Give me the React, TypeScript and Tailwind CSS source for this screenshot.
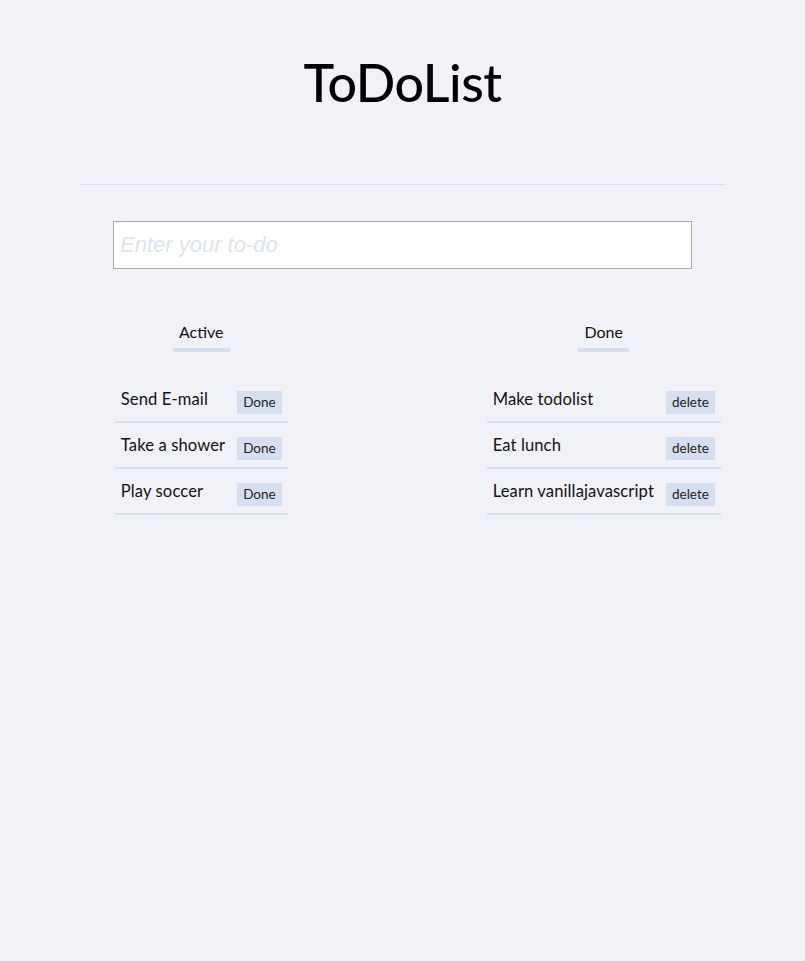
import React, { useState } from "react";

type Todo = { id: number; text: string; done: boolean };

const INITIAL: Todo[] = [
  { id: 1, text: "Send E-mail", done: false },
  { id: 2, text: "Take a shower", done: false },
  { id: 3, text: "Play soccer", done: false },
  { id: 4, text: "Make todolist", done: true },
  { id: 5, text: "Eat lunch", done: true },
  { id: 6, text: "Learn vanillajavascript", done: true },
];

export default function App() {
  const [todos, setTodos] = useState(INITIAL);
  const [value, setValue] = useState("");

  const active = todos.filter(t => !t.done);
  const finished = todos.filter(t => t.done);

  function markDone(id: number) {
    setTodos(prev => prev.map(t => (t.id === id ? { ...t, done: true } : t)));
  }

  function remove(id: number) {
    setTodos(prev => prev.filter(t => t.id !== id));
  }

  function submit(e: React.FormEvent) {
    e.preventDefault();
    if (!value.trim()) return;
    setTodos(prev => [...prev, { id: Date.now(), text: value.trim(), done: false }]);
    setValue("");
  }

  const column = (title: string, list: Todo[], label: string, onClick: (id: number) => void) => (
    <div className="flex flex-col items-center">
      <h2 className="px-1.5 pb-1 border-b-4 border-[#d6dfef] text-base text-[#111]">{title}</h2>
      <ul className="mt-[25px] flex flex-col">
        {list.map(t => (
          <li
            key={t.id}
            className="h-[46px] flex items-center justify-between gap-3 px-1.5 border-b-2 border-[#d6dfef]"
          >
            <span className="text-[16.6px] text-[#111] tracking-[0.1px]">{t.text}</span>
            <button
              onClick={() => onClick(t.id)}
              className="mt-1.5 h-[23px] px-1.5 bg-[#d6dfef] text-[13.5px] text-[#222]"
            >
              {label}
            </button>
          </li>
        ))}
      </ul>
    </div>
  );

  return (
    <div
      className="h-screen bg-[#f1f2f7] flex flex-col"
      style={{ fontFamily: "Lato, 'Open Sans', sans-serif" }}
    >
      <div className="flex-1">
        <h1 className="pt-[48px] text-center text-[52px] leading-[68px] font-medium text-black tracking-[-0.5px]">
          ToDoList
        </h1>
        <hr className="mx-auto mt-[68px] w-[647px] border-0 border-t border-[#d8e0f0]" />
        <form onSubmit={submit} className="mt-9 flex justify-center">
          <input
            value={value}
            onChange={e => setValue(e.target.value)}
            placeholder="Enter your to-do"
            className="w-[579px] h-[48px] bg-white border border-[#a9a9a9] px-1.5 text-[22px] italic outline-none placeholder:text-[#dce3f1]"
            style={{ fontFamily: "'Liberation Sans', Arial, sans-serif" }}
          />
        </form>
        <div className="mt-[51px] grid grid-cols-2">
          {column("Active", active, "Done", markDone)}
          {column("Done", finished, "delete", remove)}
        </div>
      </div>
      <div className="h-px bg-[#cdcdde]" />
    </div>
  );
}
